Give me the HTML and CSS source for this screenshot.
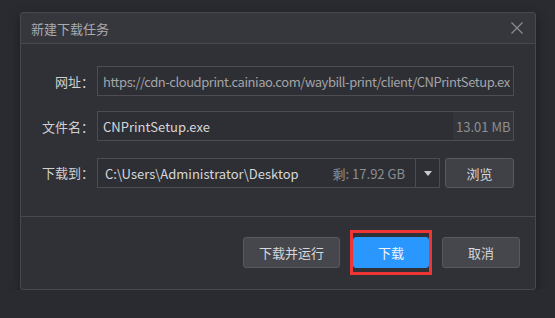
FILE: index.html
```html
<!DOCTYPE html>
<html lang="zh-CN">
    <head>
        <meta charset="UTF-8">
        <title>新建下载任务</title>
        <link rel="stylesheet" href="styles.css">
    </head>
    <body>
        <div class="dialog">
            <div class="titlebar">
                <span class="title">新建下载任务</span>
                <button class="close" aria-label="关闭">
                    <svg width="12" height="12" viewBox="0 0 12 12">
                        <path d="M0.5 0.5 L11.5 11.5 M11.5 0.5 L0.5 11.5" stroke="#8b8c90" stroke-width="1.2" fill="none"/>
                    </svg>
                </button>
            </div>
            <div class="form">
                <label class="lbl">网址：</label>
                <div class="field url">https://cdn-cloudprint.cainiao.com/waybill-print/client/CNPrintSetup.ex</div>

                <label class="lbl">文件名：</label>
                <div class="field file">
                    <span class="name">CNPrintSetup.exe</span>
                    <span class="size">13.01 MB</span>
                </div>

                <label class="lbl">下载到：</label>
                <div class="pathrow">
                    <div class="field path">
                        <span class="name">C:\Users\Administrator\Desktop</span>
                        <span class="free">剩: 17.92 GB</span>
                        <span class="drop"><i class="tri"></i></span>
                    </div>
                    <button class="btn browse">浏览</button>
                </div>
            </div>
            <div class="footer">
                <button class="btn">下载并运行</button>
                <button class="btn primary marked">下载</button>
                <button class="btn cancel">取消</button>
            </div>
        </div>
    </body>
</html>
```
FILE: styles.css
```css
:root {
    --bg: #2a2b30;
    --panel: #303136;
    --head: #36373c;
    --line: #48494e;
    --text: #d6d7da;
    --dull: #8d8e92;
    --btn: #46474c;
    --blue: #2a97ff;
}

body {
    margin: 0;
    background: var(--bg);
    font-family: "Microsoft YaHei", "Noto Sans CJK SC", sans-serif;
    font-size: 13px;
    color: var(--text);
}

.dialog {
    margin: 12px 0 0 20px;
    width: 514px;
    height: 276px;
    background: var(--panel);
    border: 1px solid var(--line);
    border-radius: 3px;
    box-shadow: 0 4px 12px rgba(0, 0, 0, 0.35);
    display: flex;
    flex-direction: column;
}

.titlebar {
    height: 30px;
    background: var(--head);
    border-bottom: 1px solid var(--line);
    border-radius: 3px 3px 0 0;
    display: flex;
    align-items: center;
    justify-content: space-between;
    padding: 0 12px 0 10px;
}

.title {
    color: #a9aaae;
    font-size: 13px;
}

.close {
    background: none;
    border: 0;
    padding: 0;
    display: flex;
}

.form {
    display: grid;
    grid-template-columns: 73px 1fr;
    column-gap: 3px;
    row-gap: 15px;
    align-items: center;
    padding: 22px 21px 28px 0;
    border-bottom: 1px solid var(--line);
}

.lbl {
    text-align: right;
    color: #cfd0d3;
}

.field {
    height: 28px;
    border: 1px solid #4c4d52;
    background: #2e2f34;
    display: flex;
    align-items: center;
    padding-left: 5px;
    box-sizing: content-box;
    white-space: nowrap;
    overflow: hidden;
}

.url {
    color: #a3a4a8;
    letter-spacing: -0.45px;
}

.file .name,
.path .name {
    flex: 1;
}

.size {
    align-self: stretch;
    display: flex;
    align-items: center;
    padding: 0 4px 0 3px;
    background: #34353a;
    color: var(--dull);
    width: 53px;
}

.pathrow {
    display: flex;
    gap: 5px;
    margin-top: 2px;
}

.path {
    flex: 1;
    padding-left: 7px;
}

.free {
    color: var(--dull);
    margin-right: 10px;
}

.drop {
    align-self: stretch;
    width: 23px;
    border-left: 1px solid #4c4d52;
    display: flex;
    align-items: center;
    justify-content: center;
}

.tri {
    border-left: 4px solid transparent;
    border-right: 4px solid transparent;
    border-top: 5px solid #c9cacd;
}

.btn {
    font-family: inherit;
    font-size: 13px;
    color: var(--text);
    background: var(--btn);
    border: 1px solid #58595e;
    border-radius: 3px;
    height: 31px;
    padding: 0;
}

.browse {
    width: 69px;
    height: 30px;
    background: #404146;
}

.footer {
    flex: 1;
    display: flex;
    justify-content: flex-end;
    align-items: center;
    gap: 13px;
    padding: 0 15px 2px 0;
}

.footer .btn {
    width: 97px;
}

.footer .primary {
    width: 76px;
    background: var(--blue);
    border-color: var(--blue);
    color: #f2f6fb;
}

.footer .cancel {
    width: 78px;
}

.marked {
    position: relative;
}

.marked::after {
    content: "";
    position: absolute;
    left: -4px;
    right: -4px;
    top: -8px;
    bottom: -8px;
    border: 3px solid #ef3535;
}
```
